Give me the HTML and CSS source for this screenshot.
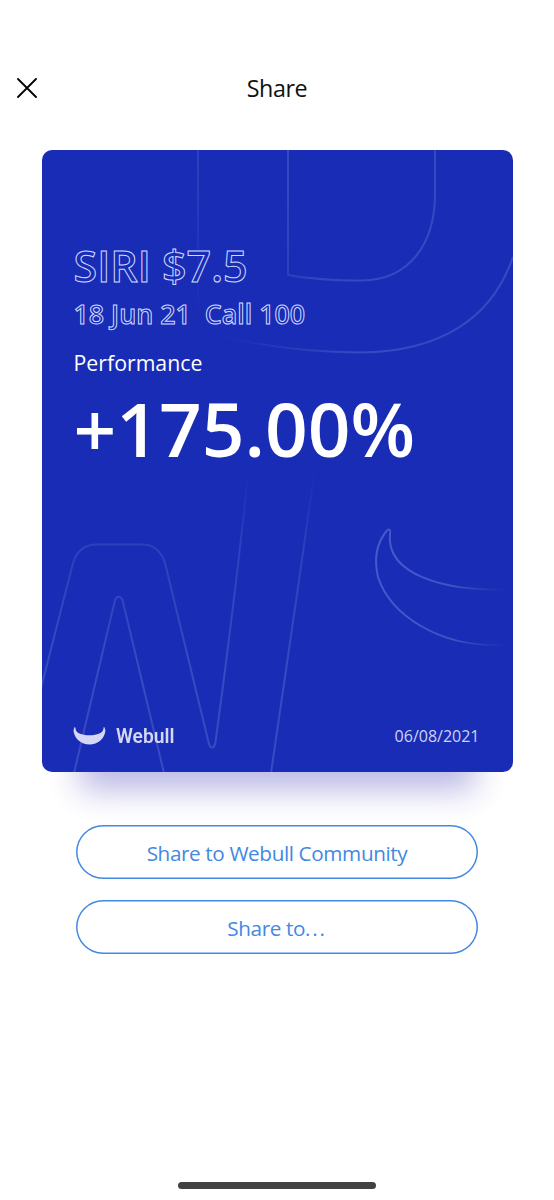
FILE: index.html
```html
<!DOCTYPE html>
<html lang="en">
<head>
<meta charset="utf-8">
<title>Share</title>
<link rel="stylesheet" href="styles.css">
</head>
<body>
<main class="screen">
  <header class="topbar">
    <button class="close" aria-label="Close">
      <svg width="20" height="20" viewBox="0 0 20 20"><path d="M1 1L19 19M19 1L1 19"/></svg>
    </button>
    <h1 class="title">Share</h1>
  </header>
  <section class="card">
    <svg class="art" viewBox="42 150 471 622" preserveAspectRatio="none">
      <defs>
        <linearGradient id="fadeTop" gradientUnits="userSpaceOnUse" x1="215" y1="330" x2="330" y2="290">
          <stop offset="0" stop-color="#8c8ce0" stop-opacity="0"/><stop offset="1" stop-color="#90a0ea" stop-opacity=".24"/>
        </linearGradient>
        <linearGradient id="fadeW" gradientUnits="userSpaceOnUse" x1="0" y1="465" x2="0" y2="670">
          <stop offset="0" stop-color="#8060c8" stop-opacity="0"/><stop offset=".4" stop-color="#8c8ce0" stop-opacity=".2"/><stop offset="1" stop-color="#90a0ea" stop-opacity=".26"/>
        </linearGradient>
        <linearGradient id="fadeHorn" gradientUnits="userSpaceOnUse" x1="375" y1="0" x2="505" y2="0">
          <stop offset="0" stop-color="#90a0f0" stop-opacity=".38"/><stop offset=".6" stop-color="#90a0e0" stop-opacity=".34"/><stop offset="1" stop-color="#9080c0" stop-opacity="0"/>
        </linearGradient>
        <linearGradient id="fadeStem" gradientUnits="userSpaceOnUse" x1="0" y1="150" x2="0" y2="320">
          <stop offset="0" stop-color="#8c8ce0" stop-opacity=".2"/><stop offset="1" stop-color="#8c8ce0" stop-opacity="0"/>
        </linearGradient>
      </defs>
      <path stroke="url(#fadeStem)" d="M198 150L198.100 320"/>
      <path stroke="url(#fadeTop)" d="M288 150V275Q318 280.500 362 280.500C410 280 435 243 435 194V150"/>
      <path stroke="url(#fadeTop)" d="M218 335.500Q288 352.500 360 352.500C441 352 492 318 513 257"/>
      <path stroke="url(#fadeW)" d="M41 688L73 563Q78.500 544.500 97 544.500H142Q159 544.500 165 563L208.500 742Q209.800 747.500 212 747.500Q214.500 747.500 215.500 742C226 665 238 570 248 475"/>
      <path stroke="url(#fadeW)" d="M74 773L115 600Q118.700 593.500 122.500 600L164 773"/>
      <path stroke="url(#fadeW)" d="M271 773C286 670 300 575 314 475"/>
      <path stroke="url(#fadeHorn)" d="M505 589.500C445 591 386 575 390 534Q390.800 531 389.500 529.800Q388 529 386.500 531C376 544 374 560 378 577C390 614 438 648 505 645"/>
    </svg>
    <div class="details">
      <p class="symbol">SIRI $7.5</p>
      <p class="contract">18 Jun 21&nbsp; Call 100</p>
      <p class="label">Performance</p>
      <p class="gain">+175.00%</p>
    </div>
    <footer class="brandbar">
      <div class="brand">
        <svg class="horns" width="33" height="20" viewBox="0 0 33 20"><path d="M1.800 1C1 2 .5 3.500 .6 5.500C2 13 8 18.500 16.500 18.500S31 13 32.300 5.500C32.500 3.500 32 2 31 1Q30.300 1 30.500 2.500C30 7 24.500 9.300 16.500 9.300S2.800 7 2.500 2.500Q2.500 1 1.800 1Z"/></svg>
        <span class="wordmark">Webull</span>
      </div>
      <time class="date">06/08/2021</time>
    </footer>
  </section>
  <div class="actions">
    <button class="action">Share to Webull Community</button>
    <button class="action">Share to<span class="dots">...</span></button>
  </div>
  <div class="home-indicator"></div>
</main>
</body>
</html>
```
FILE: styles.css
```css
* { box-sizing: border-box; }
body { margin: 0; background: #fff; font-family: "Open Sans", "Noto Sans", sans-serif; }
p, h1 { margin: 0; }
button { font: inherit; background: none; border: 0; padding: 0; }
.screen { height: 1200px; display: flex; flex-direction: column; align-items: center; overflow: hidden; }
.topbar { width: 100%; height: 150px; padding: 68px 17px 0; display: grid; grid-template-columns: 20px 1fr 20px; align-items: start; }
.close { height: 40px; display: flex; align-items: center; }
.close svg { fill: none; stroke: #000; stroke-width: 1.8; stroke-linecap: round; }
.title { font-size: 23.300px; letter-spacing: -.4px; font-weight: 400; line-height: 41px; text-align: center; color: #111; }
.card { position: relative; flex: none; width: 471px; height: 622px; border-radius: 10px; background: #192cb5; color: #fff; display: flex; flex-direction: column; justify-content: space-between; padding: 91px 33px 16px 32px; }
.card::after { content: ""; position: absolute; z-index: -1; left: 38px; right: 38px; bottom: -18px; height: 60px; background: #2925ad; opacity: .32; filter: blur(16px); }
.art { position: absolute; inset: 0; width: 471px; height: 622px; border-radius: 10px; fill: none; stroke-width: 2; }
.details, .brandbar { position: relative; white-space: nowrap; }
.symbol, .contract { color: #192cb5; font-weight: 600; }
.symbol { font-size: 43px; line-height: 49px; -webkit-text-stroke: 1px #d0daff; }
.contract { font-size: 26.800px; line-height: 48px; -webkit-text-stroke: 1px #d0daff; }
.label { font-size: 21.300px; line-height: 50px; }
.gain { font-size: 74.800px; line-height: 80px; font-weight: 600; }
.brandbar { display: flex; justify-content: space-between; align-items: center; height: 40px; }
.brand { display: flex; align-items: center; gap: 10px; margin-left: -1px; }
.horns { fill: #d4d8f5; }
.wordmark { font-family: Roboto, sans-serif; font-weight: 600; font-size: 20px; color: #d4d8f5; transform: scaleX(.96); transform-origin: left; }
.date { font-size: 16px; color: #cdd3f4; }
.actions { width: 402px; padding-top: 53px; display: flex; flex-direction: column; gap: 21px; }
.action { height: 54px; padding-top: 2px; box-shadow: inset 0 0 0 1.500px #4388e2; border-radius: 27px; color: #4388e2; font-size: 20.700px; letter-spacing: -.38px; }
.dots { letter-spacing: 1.800px; }
.home-indicator { margin: auto 0 11px; width: 198px; height: 7px; border-radius: 4px; background: #424242; }
```
